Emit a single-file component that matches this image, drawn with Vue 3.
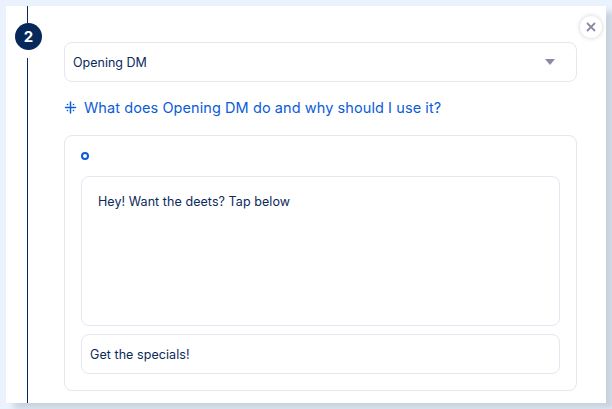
<script setup>
</script>

<template>
  <div class="page">
    <div class="card">
      <div class="rail">
        <div class="line top"></div>
        <div class="badge">2</div>
        <div class="line rest"></div>
      </div>
      <div class="main">
        <div class="select">
          <span>Opening DM</span>
          <span class="caret"></span>
        </div>
        <div class="help">
          <svg class="spark" width="13" height="13" viewBox="0 0 13 13" fill="none" stroke="#0b5cd7" stroke-width="1.5" stroke-linecap="round">
            <path d="M6.5 1v11M1.5 6.5h10M3.4 3.4h.2M9.4 3.4h.2M3.4 9.6h.2M9.4 9.6h.2" />
          </svg>
          <span>What does Opening DM do and why should I use it?</span>
        </div>
        <div class="box">
          <div class="dot"></div>
          <div class="message">Hey! Want the deets? Tap below</div>
          <div class="button-input">Get the specials!</div>
        </div>
      </div>
      <button class="close" aria-label="Close">
        <svg width="12" height="12" viewBox="0 0 12 12" fill="none" stroke="#8a8aa3" stroke-width="1.8">
          <path d="M2 2l8 8M10 2l-8 8" />
        </svg>
      </button>
    </div>
  </div>
</template>

<style>
html, body { margin: 0; background: #e9f2fd; overflow: hidden; }
</style>

<style scoped>
.page {
  width: 612px;
  height: 409px;
  padding: 6px;
  box-sizing: border-box;
  background: #e9f2fd;
  font-family: Inter, "Open Sans", sans-serif;
  color: #0b2a5b;
  overflow: hidden;
}
.card {
  position: relative;
  height: 397px;
  background: #fff;
  box-shadow: 8px 6px 6px #c9d3df;
  display: flex;
}
.rail {
  width: 45px;
  padding-left: 9px;
  box-sizing: border-box;
  display: flex;
  flex-direction: column;
  flex: none;
}
.line {
  width: 1px;
  background: #06285a;
  margin-left: 12px;
}
.line.top { height: 17px; }
.line.rest { flex: 1; margin-top: 8px; }
.badge {
  width: 27px;
  height: 27px;
  border-radius: 50%;
  background: #06285a;
  color: #fff;
  font-weight: 700;
  font-size: 15px;
  display: flex;
  align-items: center;
  justify-content: center;
}
.main {
  margin-left: 13px;
  width: 513px;
  padding-top: 36px;
}
.select {
  height: 40px;
  box-sizing: border-box;
  border: 1px solid #e6e6f0;
  border-radius: 8px;
  padding: 0 21px 0 8px;
  display: flex;
  align-items: center;
  justify-content: space-between;
  font-size: 12.5px;
}
.caret {
  width: 0;
  height: 0;
  border-left: 5px solid transparent;
  border-right: 5px solid transparent;
  border-top: 6px solid #8a8aa3;
}
.help {
  margin-top: 15px;
  height: 20px;
  display: flex;
  align-items: center;
  gap: 7px;
  color: #0b5cd7;
  font-size: 14.5px;
  letter-spacing: 0.08px;
}
.box {
  margin-top: 18px;
  height: 256px;
  box-sizing: border-box;
  border: 1px solid #e6e6f0;
  border-radius: 8px;
  padding: 16px;
}
.dot {
  width: 8px;
  height: 8px;
  border: 2px solid #0b5cd7;
  border-radius: 50%;
  box-sizing: border-box;
}
.message {
  margin-top: 16px;
  height: 150px;
  box-sizing: border-box;
  border: 1px solid #e6e6f0;
  border-radius: 8px;
  padding: 17px 16px 16px;
  font-size: 12.5px;
  letter-spacing: 0.07px;
}
.button-input {
  margin-top: 8px;
  height: 40px;
  box-sizing: border-box;
  border: 1px solid #e6e6f0;
  border-radius: 8px;
  padding: 0 8px;
  display: flex;
  align-items: center;
  font-size: 12.5px;
  letter-spacing: 0.07px;
}
.close {
  position: absolute;
  top: 10px;
  right: 4px;
  width: 22px;
  height: 22px;
  padding: 0;
  border: none;
  border-radius: 50%;
  background: #fff;
  box-shadow: 0 0 4px rgba(60, 60, 90, 0.25);
  display: flex;
  align-items: center;
  justify-content: center;
}
</style>
